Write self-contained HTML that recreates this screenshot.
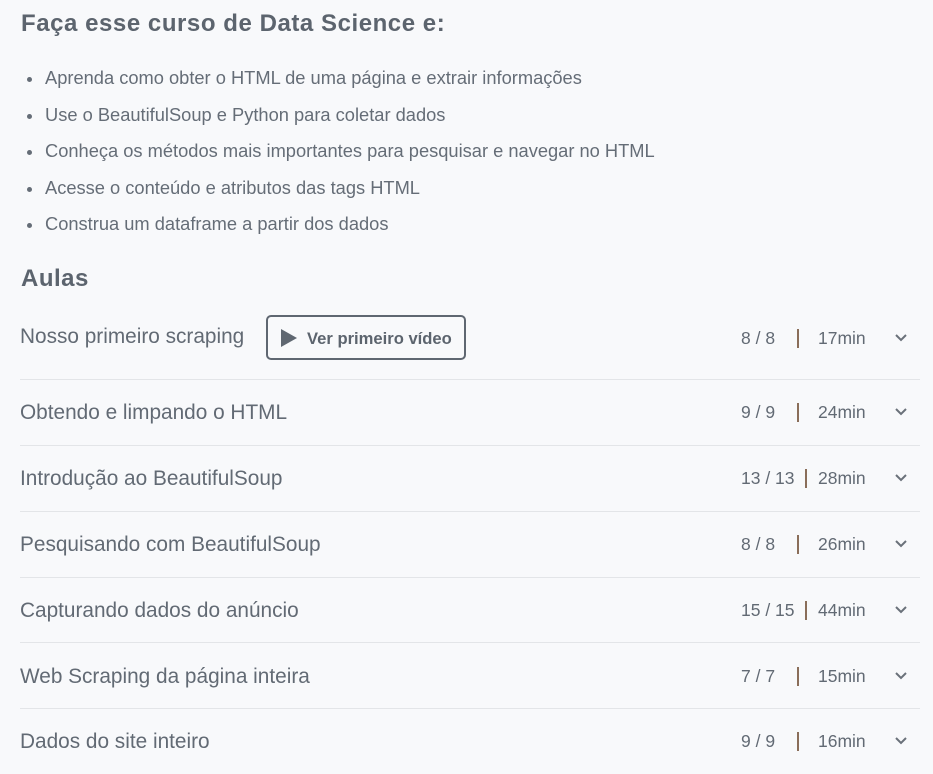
<!DOCTYPE html>
<html><head><meta charset="utf-8"><style>
body{margin:0;background:#f8f9fb;width:933px;height:774px;overflow:hidden;font-family:"Liberation Sans",sans-serif;color:#626a74;position:relative}
h2{position:absolute;left:21px;top:10px;margin:0;font-size:24px;letter-spacing:0.55px;font-weight:bold;color:#5c646e}
ul{position:absolute;left:20px;top:63px;margin:0;padding:0;list-style:none}
li{font-size:18.3px;height:36.6px;line-height:30px;padding-left:25px;position:relative;color:#656d77}
li:before{content:"";position:absolute;left:7px;top:14px;width:5px;height:5px;border-radius:50%;background:#656d77}
h3{position:absolute;left:21px;top:265px;margin:0;font-size:24px;letter-spacing:0.5px;font-weight:bold;color:#5c646e}
.row{position:absolute;left:20px;width:900px;height:20px;font-size:20.8px}
.t{position:absolute;left:0;top:-12px;line-height:24px}
.c{position:absolute;font-size:17.5px;top:-10px;line-height:20px}
.sep{position:absolute;left:20px;width:900px;height:1px;background:#e3e5e8}
.btn{position:absolute;left:266px;top:315px;width:200px;height:45px;border:2px solid #5f6771;border-radius:5px;box-sizing:border-box;font-size:16.6px;font-weight:bold;color:#5c646e}
</style></head><body>
<h2>Faça esse curso de Data Science e:</h2>
<ul>
<li>Aprenda como obter o HTML de uma página e extrair informações</li>
<li>Use o BeautifulSoup e Python para coletar dados</li>
<li>Conheça os métodos mais importantes para pesquisar e navegar no HTML</li>
<li>Acesse o conteúdo e atributos das tags HTML</li>
<li>Construa um dataframe a partir dos dados</li>
</ul>
<h3>Aulas</h3>
<div class="btn"><svg style="position:absolute;left:13px;top:12px" width="16" height="18"><path d="M0 0L16 9L0 18Z" fill="#5f6771"/></svg><span style="position:absolute;left:39px;top:12px">Ver primeiro vídeo</span></div>

<div class="row" style="top:337px"><span class="t">Nosso primeiro scraping</span></div>
<div class="sep" style="top:379px"></div>
<div class="row" style="top:413px"><span class="t">Obtendo e limpando o HTML</span></div>
<div class="sep" style="top:445px"></div>
<div class="row" style="top:479px"><span class="t">Introdução ao BeautifulSoup</span></div>
<div class="sep" style="top:511px"></div>
<div class="row" style="top:545px"><span class="t">Pesquisando com BeautifulSoup</span></div>
<div class="sep" style="top:577px"></div>
<div class="row" style="top:611px"><span class="t">Capturando dados do anúncio</span></div>
<div class="sep" style="top:642px"></div>
<div class="row" style="top:677px"><span class="t">Web Scraping da página inteira</span></div>
<div class="sep" style="top:708px"></div>
<div class="row" style="top:742px"><span class="t">Dados do site inteiro</span></div>

<script>
var d=[[338,"8 / 8",741,797],[412,"9 / 9",741,797],[478,"13 / 13",741,805],[544,"8 / 8",741,797],[610,"15 / 15",741,805],[676,"7 / 7",741,797],[741,"9 / 9",741,797]];
var m=["17min","24min","28min","26min","44min","15min","16min"];
d.forEach(function(r,i){
var h='<span class="c" style="left:'+r[2]+'px;top:'+(r[0]-10)+'px">'+r[1]+'</span>'+
'<div style="position:absolute;left:'+r[3]+'px;top:'+(r[0]-9)+'px;width:1.5px;height:19px;background:#8a6e5a"></div>'+
'<span class="c" style="left:818px;top:'+(r[0]-10)+'px">'+m[i]+'</span>'+
'<svg style="position:absolute;left:895px;top:'+(r[0]-4)+'px" width="12" height="8"><path d="M1 1L6 6L11 1" stroke="#6a717a" stroke-width="2" fill="none"/></svg>';
document.body.insertAdjacentHTML('beforeend',h);});
</script>
</body></html>
